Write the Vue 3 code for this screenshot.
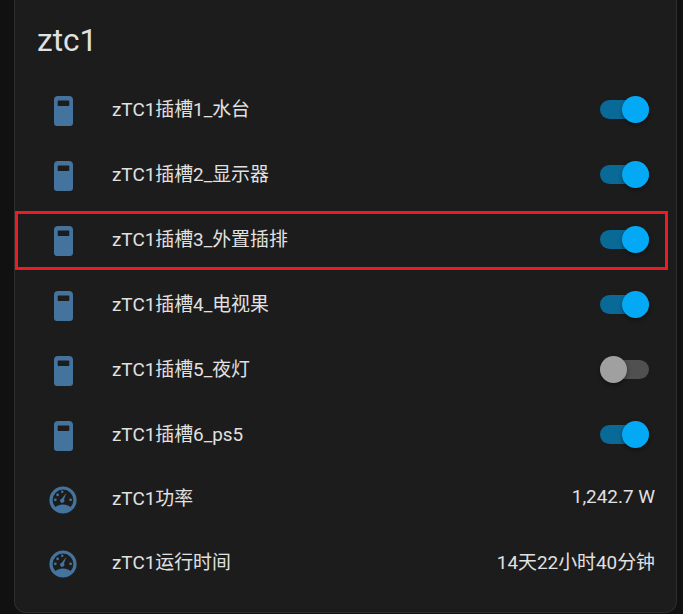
<template>
  <div class="pagina">
    <div class="cartao">
      <h1 class="titulo">ztc1</h1>
      <div class="lista">
        <div
          v-for="item in itens"
          :key="item.nome"
          class="linha"
          :class="{ destaque: item.destaque, sensor: item.valor }"
        >
          <span class="icone">
            <svg v-if="item.valor" viewBox="0 0 32 32" width="32" height="32">
              <circle cx="16" cy="16" r="12" fill="none" stroke="#44739e" stroke-width="3.2" />
              <path d="M7.400 24.400C9.400 21.800 12.400 20.600 16 20.600s6.600 1.200 8.600 3.800C22.600 27 19.500 28.400 16 28.400s-6.600-1.400-8.600-4z" fill="#44739e" />
              <path d="M19.400 8.800 17 15.600a2.100 2.100 0 1 1-2.300-.9z" fill="#44739e" />
              <circle cx="10.600" cy="10.800" r="1.400" fill="#44739e" />
              <circle cx="8.300" cy="15.800" r="1.400" fill="#44739e" />
              <circle cx="15.200" cy="7.800" r="1.200" fill="#44739e" />
              <circle cx="23.600" cy="15.800" r="1.400" fill="#44739e" />
            </svg>
            <svg v-else viewBox="0 0 19 30" width="19" height="30">
              <path
                fill-rule="evenodd"
                d="M4 0h11a4 4 0 0 1 4 4v23a3 3 0 0 1-3 3H3a3 3 0 0 1-3-3V4a4 4 0 0 1 4-4zM4.500 4.500a.8.8 0 0 0-.8.8v3.900a.8.8 0 0 0 .8.8h10a.8.8 0 0 0 .8-.8V5.300a.8.8 0 0 0-.8-.8z"
                fill="#44739e"
              />
            </svg>
          </span>
          <span class="nome">{{ item.nome }}</span>
          <span v-if="item.valor" class="valor">{{ item.valor }}</span>
          <span v-else class="chave" :class="{ ligada: item.ligado }">
            <span class="trilho"></span>
            <span class="botao"></span>
          </span>
        </div>
      </div>
    </div>
  </div>
</template>

<script setup>
const itens = [
  { nome: 'zTC1插槽1_水台', ligado: true },
  { nome: 'zTC1插槽2_显示器', ligado: true },
  { nome: 'zTC1插槽3_外置插排', ligado: true, destaque: true },
  { nome: 'zTC1插槽4_电视果', ligado: true },
  { nome: 'zTC1插槽5_夜灯', ligado: false },
  { nome: 'zTC1插槽6_ps5', ligado: true },
  { nome: 'zTC1功率', valor: '1,242.7 W' },
  { nome: 'zTC1运行时间', valor: '14天22小时40分钟' }
]
</script>

<style>
html,
body {
  margin: 0;
  background: #111111;
}
</style>

<style scoped>
.pagina {
  height: 614px;
  padding-right: 6px;
  padding-left: 14px;
  overflow: hidden;
  font-family: Roboto, "Noto Sans CJK SC", sans-serif;
}

.cartao {
  box-sizing: border-box;
  height: 613px;
  border: 1px solid #2e2e2e;
  border-top: none;
  border-radius: 0 0 12px 12px;
  background: #1c1c1c;
  color: #e1e1e1;
}

.titulo {
  margin: 0;
  padding: 21px 0 0 22px;
  font-size: 31.5px;
  font-weight: 400;
  line-height: 40px;
}

.lista {
  display: flex;
  flex-direction: column;
  padding-top: 16px;
}

.linha {
  position: relative;
  display: flex;
  align-items: center;
  height: 65px;
  padding-right: 21px;
  font-size: 18.9px;
}

.linha.sensor {
  height: 64px;
}

.destaque::after {
  content: "";
  position: absolute;
  top: 4px;
  left: 0;
  right: 8px;
  bottom: 2px;
  border: 3px solid #ed1c24;
  pointer-events: none;
}

.icone {
  display: flex;
  align-items: center;
  justify-content: center;
  width: 32px;
  margin-left: 32px;
  margin-right: 33px;
  padding-top: 2px;
}

.nome {
  flex: 1;
  padding-bottom: 5px;
}

.valor {
  padding-bottom: 5px;
  white-space: nowrap;
}

.chave {
  position: relative;
  display: block;
  width: 49px;
  height: 27px;
  margin-right: 6px;
}

.trilho {
  position: absolute;
  top: 4px;
  left: 0;
  width: 100%;
  height: 19px;
  border-radius: 10px;
  background: #505050;
}

.botao {
  position: absolute;
  top: 0;
  left: 0;
  width: 27px;
  height: 27px;
  border-radius: 50%;
  background: #a0a0a0;
  box-shadow: 0 2px 4px rgba(0, 0, 0, 0.4);
}

.ligada .trilho {
  background: #0a6a97;
}

.ligada .botao {
  left: 22px;
  background: #03a9f4;
}
</style>
